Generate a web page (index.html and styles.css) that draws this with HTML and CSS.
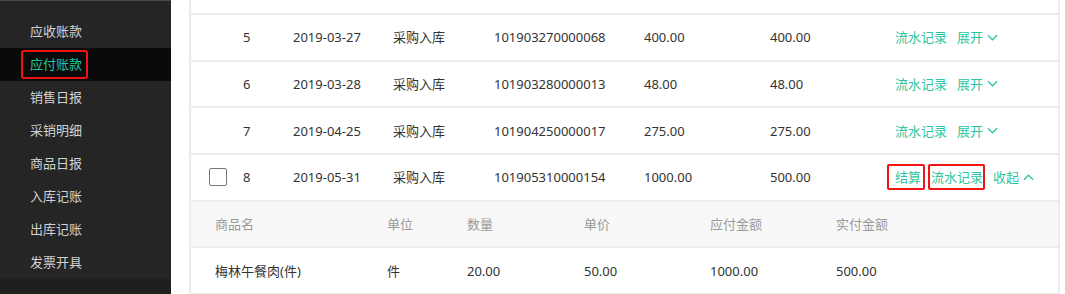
FILE: index.html
```html
<!DOCTYPE html>
<html lang="zh-CN">

<head>
    <meta charset="UTF-8">
    <meta name="viewport" content="width=device-width, initial-scale=1.0">
    <title>应付账款</title>
    <link rel="stylesheet" href="styles.css">
</head>

<body>
    <div class="layout">
        <aside class="sidebar">
            <ul class="menu">
                <li class="menu-item"><span>应收账款</span></li>
                <li class="menu-item active"><span class="marked">应付账款</span></li>
                <li class="menu-item"><span>销售日报</span></li>
                <li class="menu-item"><span>采销明细</span></li>
                <li class="menu-item"><span>商品日报</span></li>
                <li class="menu-item"><span>入库记账</span></li>
                <li class="menu-item"><span>出库记账</span></li>
                <li class="menu-item"><span>发票开具</span></li>
            </ul>
        </aside>

        <main class="content">
            <div class="bill-table">
                <div class="bill-row cut"></div>

                <div class="bill-row">
                    <div class="cell"></div>
                    <div class="cell">5</div>
                    <div class="cell">2019-03-27</div>
                    <div class="cell">采购入库</div>
                    <div class="cell">101903270000068</div>
                    <div class="cell">400.00</div>
                    <div class="cell">400.00</div>
                    <div class="cell actions">
                        <a class="link">流水记录</a>
                        <a class="link">展开<svg class="chevron" viewBox="0 0 12 7"><polyline points="1,1 6,6 11,1" /></svg></a>
                    </div>
                </div>

                <div class="bill-row">
                    <div class="cell"></div>
                    <div class="cell">6</div>
                    <div class="cell">2019-03-28</div>
                    <div class="cell">采购入库</div>
                    <div class="cell">101903280000013</div>
                    <div class="cell">48.00</div>
                    <div class="cell">48.00</div>
                    <div class="cell actions">
                        <a class="link">流水记录</a>
                        <a class="link">展开<svg class="chevron" viewBox="0 0 12 7"><polyline points="1,1 6,6 11,1" /></svg></a>
                    </div>
                </div>

                <div class="bill-row">
                    <div class="cell"></div>
                    <div class="cell">7</div>
                    <div class="cell">2019-04-25</div>
                    <div class="cell">采购入库</div>
                    <div class="cell">101904250000017</div>
                    <div class="cell">275.00</div>
                    <div class="cell">275.00</div>
                    <div class="cell actions">
                        <a class="link">流水记录</a>
                        <a class="link">展开<svg class="chevron" viewBox="0 0 12 7"><polyline points="1,1 6,6 11,1" /></svg></a>
                    </div>
                </div>

                <div class="bill-row">
                    <div class="cell check-cell"><span class="checkbox"></span></div>
                    <div class="cell">8</div>
                    <div class="cell">2019-05-31</div>
                    <div class="cell">采购入库</div>
                    <div class="cell">101905310000154</div>
                    <div class="cell">1000.00</div>
                    <div class="cell">500.00</div>
                    <div class="cell actions">
                        <a class="link marked-link settle">结算</a>
                        <a class="link marked-link flow">流水记录</a>
                        <a class="link">收起<svg class="chevron" viewBox="0 0 12 7"><polyline points="1,6 6,1 11,6" /></svg></a>
                    </div>
                </div>

                <div class="detail-row detail-head">
                    <div class="cell">商品名</div>
                    <div class="cell">单位</div>
                    <div class="cell">数量</div>
                    <div class="cell">单价</div>
                    <div class="cell">应付金额</div>
                    <div class="cell">实付金额</div>
                </div>
                <div class="detail-row">
                    <div class="cell">梅林午餐肉(件)</div>
                    <div class="cell">件</div>
                    <div class="cell">20.00</div>
                    <div class="cell">50.00</div>
                    <div class="cell">1000.00</div>
                    <div class="cell">500.00</div>
                </div>
            </div>
        </main>
    </div>
</body>

</html>
```

FILE: styles.css
```css
body {
    margin: 0;
    background-color: #fff;
    font-family: "Noto Sans", "Noto Sans CJK SC", sans-serif;
    font-size: 13px;
    color: #333;
}

.layout {
    display: flex;
    height: 294px;
    overflow: hidden;
}

/* sidebar */
.sidebar {
    width: 171px;
    flex-shrink: 0;
    background-color: #1f1f1f;
    border-top: 1px solid #4a4a4a;
}

.menu {
    list-style: none;
    margin: 0;
    padding: 14px 0 0;
    background-color: #252525;
}

.menu-item {
    height: 33px;
    line-height: 33px;
    padding-left: 30px;
    color: #d2d2d2;
}

.menu-item.active {
    background-color: #0a0a0a;
    color: #1fc89c;
}

.marked {
    position: relative;
}

.marked::after {
    content: "";
    position: absolute;
    top: -5px;
    bottom: -6px;
    left: -9px;
    right: -6px;
    border: 2px solid #f01414;
    border-radius: 3px;
}

/* table */
.content {
    flex: 1;
    padding: 0 5px 0 18px;
}

.bill-table {
    border-left: 2px solid #ececec;
    border-right: 2px solid #ececec;
}

.bill-row {
    display: grid;
    grid-template-columns: 52px 50px 100px 101px 150px 126px 125px 1fr;
    align-items: center;
    height: 44.67px;
    border-bottom: 2px solid #ececec;
}

.bill-row.cut {
    height: 13px;
}

.cell {
    line-height: 18px;
    white-space: nowrap;
}

.check-cell {
    padding-left: 18px;
    display: flex;
}

.checkbox {
    width: 16px;
    height: 16px;
    border: 1px solid #777;
    border-radius: 2px;
}

.actions {
    display: flex;
    align-items: center;
    gap: 10px;
}

.link {
    display: flex;
    align-items: center;
    color: #2ec4a0;
    cursor: pointer;
}

.marked-link {
    position: relative;
}

.marked-link::after {
    content: "";
    position: absolute;
    top: -4px;
    bottom: -4px;
    border: 2px solid #f01414;
    border-radius: 2px;
}

.settle::after {
    left: -8px;
    right: -4px;
}

.flow::after {
    left: -3px;
    right: -2px;
}

.chevron {
    width: 11px;
    height: 7px;
    margin-left: 4px;
    fill: none;
    stroke: #2ec4a0;
    stroke-width: 1.4;
}

/* goods detail */
.detail-row {
    display: grid;
    grid-template-columns: 196px 80px 117px 126px 126px 1fr;
    align-items: center;
    height: 44.67px;
    border-bottom: 2px solid #ececec;
}

.detail-row .cell:first-child {
    padding-left: 24px;
}

.detail-head {
    background-color: #f8f8f8;
    color: #9a9a9a;
}
```
